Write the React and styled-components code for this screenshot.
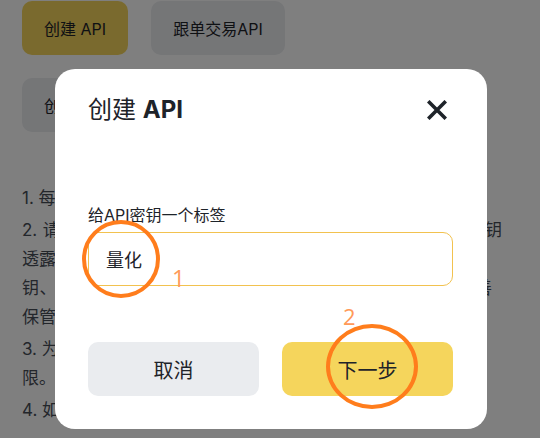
import React from 'react';
import styled, { createGlobalStyle } from 'styled-components';

const GlobalStyle = createGlobalStyle`
    html, body {
        margin: 0;
        padding: 0;
        background: #fff;
        font-family: "Inter", "Noto Sans CJK SC", sans-serif;
        color: #1e2329;
        overflow: hidden;
    }
`;

const Page = styled.div`
    width: 540px;
    height: 438px;
    padding: 1px 22px 0 22px;
    box-sizing: border-box;
`;

const TabRow = styled.div`
    display: flex;
    gap: 23px;
    margin-bottom: 23px;
`;

const Tab = styled.button`
    width: ${props => props.$w}px;
    height: 54px;
    padding: 0;
    border: none;
    border-radius: 10px;
    background: ${props => (props.$active ? '#f5d55c' : '#eaecef')};
    color: #1e2329;
    font-family: inherit;
    font-size: 16px;
`;

const Notes = styled.div`
    margin-top: 52px;
    width: 480px;
    font-size: 17px;
    line-height: 29px;
    color: #474d57;
`;

const Para = styled.div`
    margin-bottom: 3px;
`;

const Line = styled.div`
    margin-right: ${props => props.$inset || 0}px;
    text-align: ${props => (props.$full ? 'justify' : 'left')};
    text-align-last: ${props => (props.$full ? 'justify' : 'auto')};
    white-space: ${props => (props.$full ? 'normal' : 'nowrap')};
`;

const Overlay = styled.div`
    position: fixed;
    inset: 0;
    background: rgba(0, 0, 0, 0.5);
    display: flex;
    justify-content: center;
    align-items: flex-start;
    padding: 69px 0 0 2px;
`;

const Modal = styled.div`
    position: relative;
    width: 432px;
    height: 360px;
    box-sizing: border-box;
    background: #fff;
    border-radius: 20px;
    padding: 26px 34px 33px 33px;
    display: flex;
    flex-direction: column;
`;

const Header = styled.div`
    display: flex;
    align-items: center;
    justify-content: space-between;
    height: 30px;
`;

const Title = styled.h2`
    margin: 0;
    font-size: 24px;
    font-weight: 400;
    line-height: 30px;
    color: #1e2329;

    b {
        font-weight: 700;
    }
`;

const Close = styled.button`
    border: none;
    background: none;
    padding: 0;
    margin-right: 6px;
    width: 20px;
    height: 20px;
    display: flex;
`;

const Label = styled.div`
    margin-top: 80px;
    font-size: 16px;
    line-height: 20px;
    color: #1e2329;
`;

const Input = styled.div`
    margin-top: 7px;
    height: 54px;
    box-sizing: border-box;
    border: 1px solid #f2c24f;
    border-radius: 10px;
    padding: 0 17px;
    display: flex;
    align-items: center;
    font-size: 18px;
    color: #1e2329;
`;

const Actions = styled.div`
    margin-top: auto;
    display: grid;
    grid-template-columns: 1fr 1fr;
    gap: 23px;
`;

const ActionButton = styled.button`
    height: 54px;
    border: none;
    border-radius: 10px;
    background: ${props => (props.$primary ? '#f5d55c' : '#eaecef')};
    color: #1e2329;
    font-family: inherit;
    font-size: 20px;
`;

const Ring = styled.div`
    position: absolute;
    left: ${props => props.$x}px;
    top: ${props => props.$y}px;
    width: ${props => props.$w}px;
    height: ${props => props.$h}px;
    box-sizing: border-box;
    border: 4px solid #ff7d1c;
    border-radius: 50%;
    pointer-events: none;
`;

const Mark = styled.span`
    position: absolute;
    left: ${props => props.$x}px;
    top: ${props => props.$y}px;
    font-family: "Open Sans", sans-serif;
    font-size: ${props => props.$size}px;
    line-height: 1;
    color: #ff9a58;
`;

export default function App() {
    return (
        <>
            <GlobalStyle />
            <Page>
                <TabRow>
                    <Tab $active $w={106}>创建 API</Tab>
                    <Tab $w={134}>跟单交易API</Tab>
                </TabRow>
                <TabRow>
                    <Tab $w={106}>创建 API</Tab>
                </TabRow>
                <Notes>
                    <Para>
                        <Line>1. 每个账户最多可创建30个API密钥。</Line>
                    </Para>
                    <Para>
                        <Line $full>2. 请妥善保管您的API密钥，切勿向任何他人分享您的API密钥</Line>
                        <Line>透露给任何第三方。为保证账户安全，请勿泄露</Line>
                        <Line $full $inset={10}>钥、密钥以及二次验证码等敏感信息，请您务必您的密钥妥善</Line>
                        <Line>保管。</Line>
                    </Para>
                    <Para>
                        <Line>3. 为了账户的资金安全，建议绑定IP访问权</Line>
                        <Line>限。</Line>
                    </Para>
                    <Para>
                        <Line>4. 如发现异常，请立即删除API密钥。</Line>
                    </Para>
                </Notes>
            </Page>
            <Overlay>
                <Modal>
                    <Header>
                        <Title>创建 <b>API</b></Title>
                        <Close aria-label="close">
                            <svg width="20" height="20" viewBox="0 0 20 20">
                                <path d="M2.5 2.5 L17.5 17.5 M17.5 2.5 L2.5 17.5" stroke="#1e2329" strokeWidth="3.6" strokeLinecap="square" />
                            </svg>
                        </Close>
                    </Header>
                    <Label>给API密钥一个标签</Label>
                    <Input>量化</Input>
                    <Actions>
                        <ActionButton>取消</ActionButton>
                        <ActionButton $primary>下一步</ActionButton>
                    </Actions>
                    <Ring $x={27} $y={151} $w={78} $h={78} />
                    <Mark $x={117} $y={198} $size={23}>1</Mark>
                    <Ring $x={271} $y={255} $w={92} $h={85} />
                    <Mark $x={288} $y={236} $size={22}>2</Mark>
                </Modal>
            </Overlay>
        </>
    );
}
